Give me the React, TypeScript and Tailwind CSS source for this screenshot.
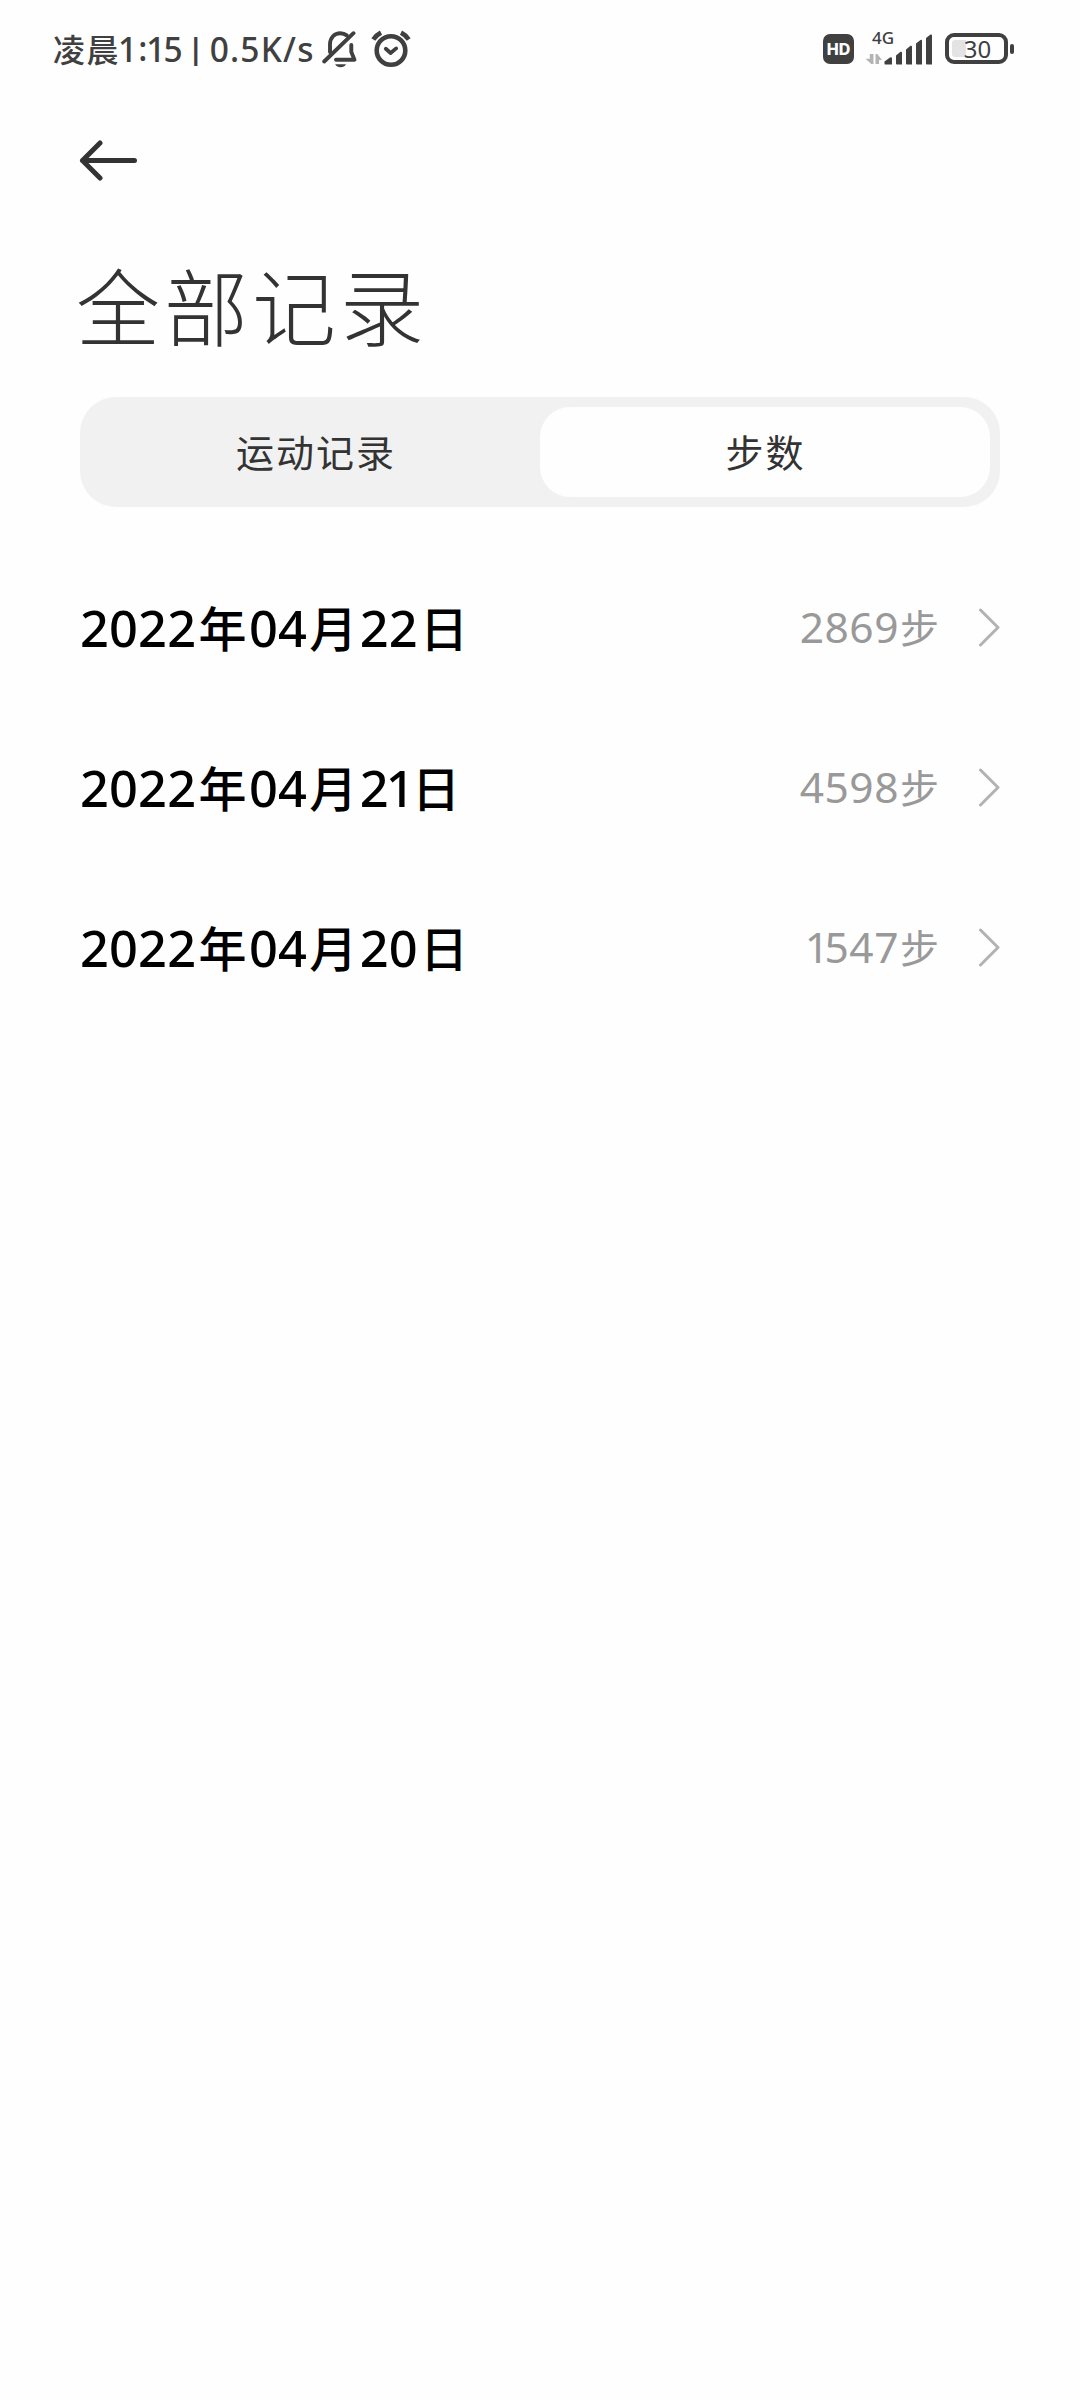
import React from "react";

const latin = "font-['Noto_Sans','Noto_Sans_CJK_SC',sans-serif]";
const cjk = "font-['Noto_Sans_CJK_SC',sans-serif]";

const records = [
  { year: "2022", month: "04", day: "22", steps: "2869" },
  { year: "2022", month: "04", day: "21", steps: "4598" },
  { year: "2022", month: "04", day: "20", steps: "1547" },
];

function BellOff() {
  return (
    <svg width="36" height="38" viewBox="0 0 36 38" fill="none" stroke="#404040" strokeWidth="3.9" strokeLinecap="round" strokeLinejoin="round">
      <path d="M2.2 31.5 31.5 3.2" />
      <path d="M8 22V14.5C8 7.5 12.500 3.200 18.300 3.200C21 3.200 23 4 24.800 5.400" />
      <path d="M29.300 15V22L32.500 29.700H14" />
      <path d="M13.200 34.300H24C22.800 36.500 21 37.300 18.600 37.300S14.400 36.500 13.200 34.300Z" fill="#404040" stroke="none" />
    </svg>
  );
}

function Alarm() {
  return (
    <svg width="40" height="38" viewBox="0 0 40 38" fill="none" stroke="#404040" strokeWidth="4.6" strokeLinecap="round" strokeLinejoin="round">
      <circle cx="20" cy="20.500" r="14.300" />
      <path d="M14.800 18.800 19.600 23 25.200 18.400" strokeWidth="3.800" />
      <path d="M2.300 9.400Q5 5.200 10 2.600M37.700 9.400Q35 5.200 30 2.600" strokeLinecap="butt" />
    </svg>
  );
}

function Signal() {
  return (
    <svg width="68" height="32" viewBox="0 0 68 32">
      <g fill="#404040">
        <path d="M18.500 31V28.500L24 24.500Q26 23.500 26 25.500V31Q26 31.500 25.500 31.500H20Q18.500 31.500 18.500 31Z" />
        <path d="M30 22.500 34.500 18.800Q36 18.200 36 19.800V31.500H31Q30 31.500 30 30.500Z" />
        <path d="M40 16.500 44.500 12.800Q46 12.200 46 13.800V31.500H41Q40 31.500 40 30.500Z" />
        <path d="M50 10.500 54.500 7Q56 6.400 56 8V31.500H51Q50 31.500 50 30.500Z" />
        <path d="M60 5 64.500 1.500Q66 1 66 2.500V31.500H61Q60 31.500 60 30.500Z" />
      </g>
      <g fill="#b4b4b4">
        <path d="M3.800 21H7.500V31H5.200L-0.500 25.800H3.800Z" />
        <path d="M9.500 21H11.300L16 27H13V31H9.500Z" />
      </g>
    </svg>
  );
}

function StatusBar() {
  return (
    <header className="flex h-[97px] items-start justify-between pr-[66px] pl-[53px] text-[#404040]">
      <div className="flex h-[97px] items-center">
        <span className={`${cjk} text-[32px] leading-[97px] font-medium tracking-[1.500px]`}>凌晨</span>
        <div className={`${latin} flex items-center pt-[2px] text-[33.500px] leading-[97px] font-medium`}>
          <span className="-ml-0.5">1</span>
          <span className="ml-px pb-[3px]">:</span>
          <span className="-mr-0.5 -ml-px">1</span>
          <span>5</span>
          <span className="mr-[6px] ml-[5px] pb-[5px] text-[29px] font-bold">|</span>
          <span className="tracking-[1.200px]">0.5K/s</span>
        </div>
        <div className="ml-[7px] flex items-center gap-[13px]">
          <BellOff />
          <Alarm />
        </div>
      </div>
      <div className="flex h-[97px] items-center">
        <div className="flex h-[30px] w-[31px] items-center justify-center rounded-[7px] bg-[#404040] font-['Inter',sans-serif] text-[16px] font-extrabold text-[#fdfdfd]">HD</div>
        <div className="relative ml-[12px] flex">
          <Signal />
          <span className={`${latin} absolute top-[-4px] left-[6px] text-[17px] leading-[17px] font-medium`}>4G</span>
        </div>
        <div className="ml-[11px] flex items-center gap-[2px]">
          <div className={`${latin} relative flex h-[31px] w-[63px] items-center justify-center rounded-[9px] border-4 border-[#404040] text-[24px] leading-none`}>
            <div className="absolute top-[3px] left-[3px] h-[17px] w-[14px] rounded-l-[3px] bg-[#e3e3e3]" />
            <span className="relative pl-[2px]">30</span>
          </div>
          <div className="h-[10px] w-[4px] rounded-[2px] bg-[#404040]" />
        </div>
      </div>
    </header>
  );
}

function Tabs() {
  return (
    <div className={`${cjk} mx-20 mt-[25px] flex h-[110px] rounded-[36px] bg-[#f1f1f1] p-[10px] text-[38px] tracking-[2px] text-[#333333]`}>
      <button className="flex w-1/2 items-center justify-center rounded-[30px] pb-[3px] pl-[2px]">运动记录</button>
      <button className="flex w-1/2 items-center justify-center rounded-[30px] bg-[#fefefe] pb-[3px] pl-px">步数</button>
    </div>
  );
}

function Digits({ value }: { value: string }) {
  return (
    <span className={`${latin} pt-px text-[50.500px] leading-[70px] font-[540] tracking-[0.150px]`}>
      {value.split("").map((d, i) => (
        <span key={i} className={d === "1" ? "-mr-[5px] -ml-[3px]" : ""}>{d}</span>
      ))}
    </span>
  );
}

function DateUnit({ children }: { children: string }) {
  return <span className={`${cjk} w-[52.700px] pb-[3px] text-center text-[48px] leading-[70px] font-medium`}>{children}</span>;
}

export default function App() {
  return (
    <main className="h-[2400px] w-[1080px] overflow-hidden bg-[#fefefe]">
      <StatusBar />
      <nav className="flex h-[126px] items-center pl-[78px]">
        <svg width="60" height="42" viewBox="0 0 60 42" fill="none" stroke="#333333" strokeWidth="5" strokeLinecap="round" strokeLinejoin="round">
          <path d="M4.500 21.500H56.500M22 4 4.500 21.500 22 39" />
        </svg>
      </nav>
      <h1 className={`${cjk} mt-3 pl-[76px] text-[84px] leading-[137px] font-light tracking-[4px] text-[#333333]`}>全部记录</h1>
      <Tabs />
      <ul className="mt-10">
        {records.map((r) => (
          <li key={r.day} className="flex h-40 items-center justify-between pr-20 pl-20">
            <div className="flex items-center text-black">
              <Digits value={r.year} />
              <DateUnit>年</DateUnit>
              <Digits value={r.month} />
              <DateUnit>月</DateUnit>
              <Digits value={r.day} />
              <DateUnit>日</DateUnit>
            </div>
            <div className="flex items-center text-[#999999]">
              <span className={`${latin} text-[42.500px] tracking-[0.500px]`}>
                {r.steps.split("").map((d, i) => (
                  <span key={i} className={d === "1" ? "-mr-[5px]" : ""}>{d}</span>
                ))}
              </span>
              <span className={`${cjk} ml-px pb-0.5 text-[39px]`}>步</span>
              <svg className="ml-[39px]" width="22" height="40" viewBox="0 0 22 40" fill="none" stroke="#b2b2b2" strokeWidth="3" strokeLinecap="round" strokeLinejoin="round">
                <path d="M2.500 3 20 20.500 2.500 38" />
              </svg>
            </div>
          </li>
        ))}
      </ul>
    </main>
  );
}
